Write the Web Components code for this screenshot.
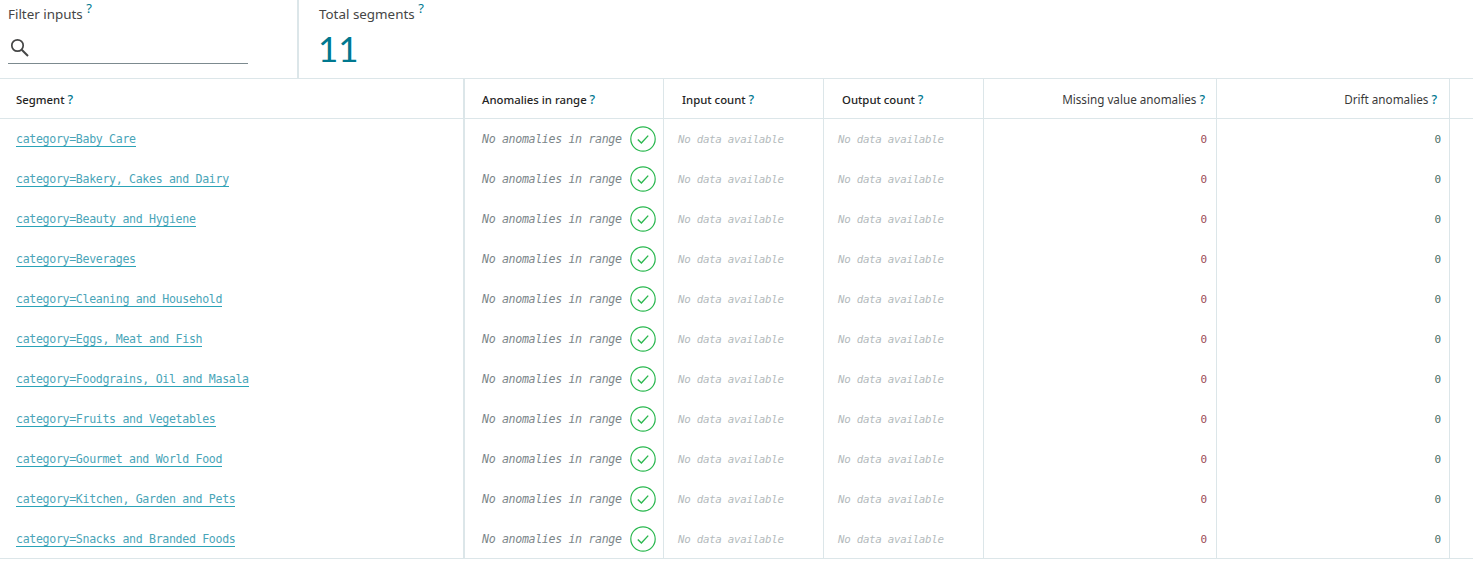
<!DOCTYPE html>
<html>
<head>
<meta charset="utf-8">
<style>
  html, body { margin: 0; background: #fff; }
  body { font-family: "Noto Sans", "Liberation Sans", sans-serif; }
</style>
</head>
<body>
<seg-page></seg-page>
<script>
const ROWS = [
  "category=Baby Care",
  "category=Bakery, Cakes and Dairy",
  "category=Beauty and Hygiene",
  "category=Beverages",
  "category=Cleaning and Household",
  "category=Eggs, Meat and Fish",
  "category=Foodgrains, Oil and Masala",
  "category=Fruits and Vegetables",
  "category=Gourmet and World Food",
  "category=Kitchen, Garden and Pets",
  "category=Snacks and Branded Foods"
]

class HelpLabel extends HTMLElement {
  constructor() {
    super()
    this.attachShadow({ mode: "open" })
    this.shadowRoot.innerHTML = `
      <style>
        :host { display: inline-block; white-space: nowrap; }
        span { color: #00788f; font-weight: 500; font-size: 12.5px; }
        :host([raised]) span { font-size: 13px; font-weight: 400; position: relative; top: -6px; }
      </style>
      <slot></slot> <span>?</span>
    `
  }
}
customElements.define("help-label", HelpLabel)

class FilterBar extends HTMLElement {
  constructor() {
    super()
    this.attachShadow({ mode: "open" })
    this.shadowRoot.innerHTML = `
      <style>
        :host { display: flex; height: 78px; border-bottom: 1px solid #dce6e9; color: #454646; font-size: 13.4px; line-height: 18px; }
        .filter { width: 299px; box-sizing: border-box; padding: 5px 0 0 8px; border-right: 2px solid #dce6e9; }
        .input { width: 240px; height: 36px; margin-top: 5px; box-sizing: border-box; border-bottom: 1px solid #7c8a8f; display: flex; align-items: center; padding: 5px 0 0 2px; }
        .total { padding: 5px 0 0 20px; }
        .value { font-family: "Lato", "Noto Sans", sans-serif; font-size: 35px; line-height: 40px; color: #00788f; margin-top: 5px; margin-left: -1px; font-weight: 400; }
      </style>
      <div class="filter">
        <help-label raised>Filter inputs</help-label>
        <div class="input">
          <svg width="20" height="20" viewBox="0 0 20 20" fill="none" stroke="#454646" stroke-width="1.7">
            <circle cx="7.5" cy="7.5" r="5.7"/>
            <path d="M11.7 11.7l6.3 6.3" stroke-width="2"/>
          </svg>
        </div>
      </div>
      <div class="total">
        <help-label raised>Total segments</help-label>
        <div class="value">11</div>
      </div>
    `
  }
}
customElements.define("filter-bar", FilterBar)

class OkIcon extends HTMLElement {
  constructor() {
    super()
    this.attachShadow({ mode: "open" })
    this.shadowRoot.innerHTML = `
      <style>
        :host { display: block; width: 26px; height: 26px; }
        svg { display: block; }
      </style>
      <svg width="26" height="26" viewBox="0 0 26 26" fill="none" stroke="#2ab84f">
        <circle cx="13" cy="13" r="12.2" stroke-width="1.2"/>
        <path d="M7.8 13.4l3.6 3.6 6.8-7.4" stroke-width="1.4"/>
      </svg>
    `
  }
}
customElements.define("ok-icon", OkIcon)

class SegmentTable extends HTMLElement {
  constructor() {
    super()
    this.attachShadow({ mode: "open" })
    const head = `
      <div class="th seg"><help-label>Segment</help-label></div>
      <div class="th anom"><help-label>Anomalies in range</help-label></div>
      <div class="th count"><help-label>Input count</help-label></div>
      <div class="th count"><help-label>Output count</help-label></div>
      <div class="th num light one"><help-label>Missing value anomalies</help-label></div>
      <div class="th num light two"><help-label>Drift anomalies</help-label></div>
      <div class="th end"></div>
    `
    const body = ROWS.map(name => `
      <div class="td seg"><a>${name}</a></div>
      <div class="td anom"><i>No anomalies in range</i><ok-icon></ok-icon></div>
      <div class="td nodata"><i>No data available</i></div>
      <div class="td nodata"><i>No data available</i></div>
      <div class="td num red one">0</div>
      <div class="td num green two">0</div>
      <div class="td end"></div>
    `).join("")
    this.shadowRoot.innerHTML = `
      <style>
        :host { display: grid; grid-template-columns: 465px 199px 160px 160px 233px 233px 23px; grid-template-rows: repeat(11, 40px) 39px; border-bottom: 1px solid #dce6e9; }
        .th, .td { box-sizing: border-box; display: flex; align-items: center; border-right: 1px solid #dce6e9; min-width: 0; }
        .th { border-bottom: 1px solid #dce6e9; font-size: 11.35px; font-weight: 500; color: #242424; padding-top: 2px; }
        .td { font-family: "DejaVu Sans Mono", monospace; font-size: 11.6px; letter-spacing: -.33px; padding-top: 1px; }
        .th.light { font-weight: 400; color: #3a3a3a; font-size: 11.7px; }
        .seg { padding-left: 16px; border-right: 2px solid #dce6e9; }
        .anom { padding-left: 17px; }
        .td.anom { justify-content: space-between; padding-right: 7px; padding-top: 0; color: #7c8689; }
        .th.count { padding-left: 18px; }
        .nodata { padding-left: 14px; color: #b4bbbd; font-size: 10.8px; letter-spacing: -.28px; }
        .num { justify-content: flex-end; }
        .td.num { font-size: 11px; letter-spacing: 0; }
        .th.one { padding-right: 11px; }
        .th.two { padding-right: 12px; }
        .td.one { padding-right: 9px; }
        .td.two { padding-right: 8px; }
        .red { color: #9a4a55; }
        .green { color: #4d6f66; }
        .end { border-right: 0; }
        a { color: #4aa5b8; border-bottom: 1px solid #2ba4b8; line-height: 14px; }
        i { font-style: italic; }
      </style>
      ${head}${body}
    `
  }
}
customElements.define("segment-table", SegmentTable)

class SegPage extends HTMLElement {
  constructor() {
    super()
    this.attachShadow({ mode: "open" })
    this.shadowRoot.innerHTML = `
      <style>:host { display: block; }</style>
      <filter-bar></filter-bar>
      <segment-table></segment-table>
    `
  }
}
customElements.define("seg-page", SegPage)
</script>
</body>
</html>
